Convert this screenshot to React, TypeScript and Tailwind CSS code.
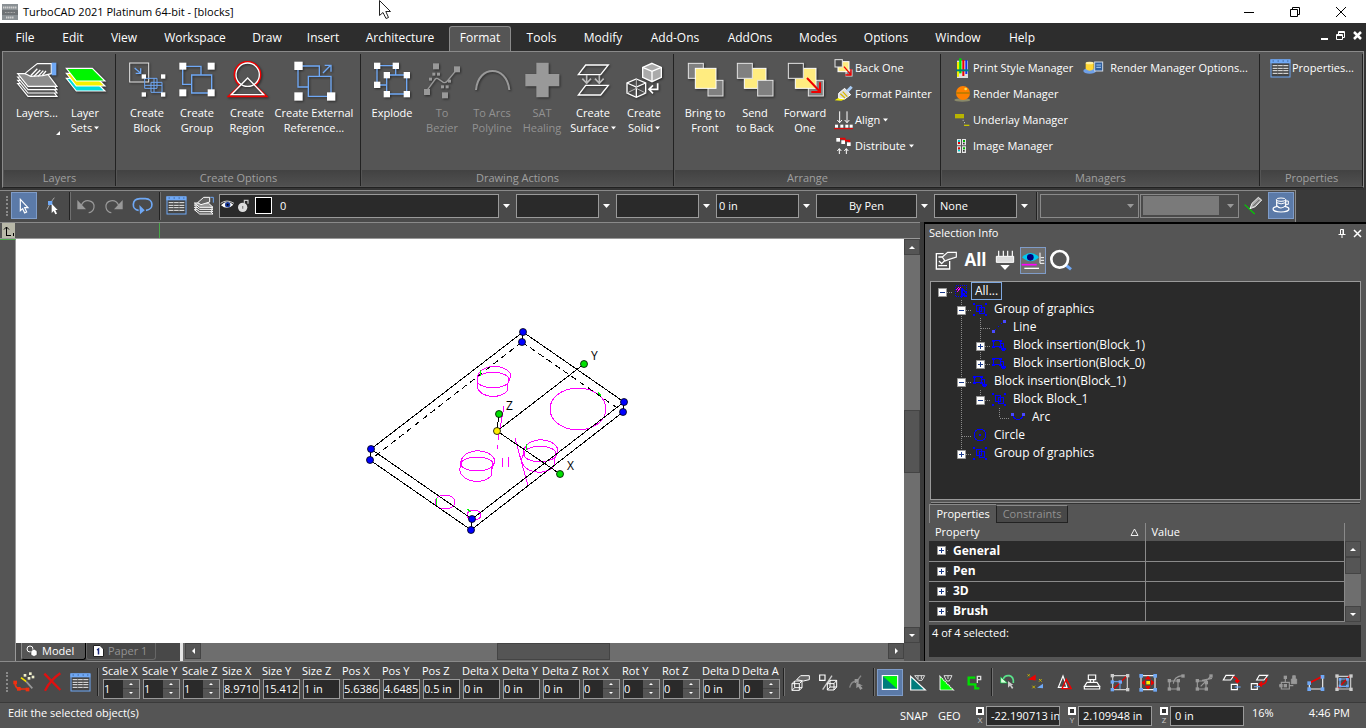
import { useState, type ReactNode } from "react";
import { clsx } from "clsx";

const BLUE = "#6fa8f5";

/* ---------- Icons ---------- */

// Glyphs are drawn on a grid three times finer than the screen.
function Glyph({ box, children }: { box: [number, number, number, number]; children: ReactNode }) {
  return (
    <svg
      viewBox={box.join(" ")}
      width={Math.round(box[2] / 3)}
      height={Math.round(box[3] / 3)}
      className="shrink-0"
      fill="none"
      aria-hidden="true"
    >
      {children}
    </svg>
  );
}

function Dots({ at, size, fill = "#fff" }: { at: number[][]; size: number; fill?: string }) {
  return (
    <>
      {at.map(([x, y]) => (
        <rect key={`${x}-${y}`} x={x} y={y} width={size} height={size} fill={fill} />
      ))}
    </>
  );
}

const LayersIcon = () => (
  <Glyph box={[40, 184, 126, 114]}>
    {[30, 20, 10, 0].map((dy) => (
      <path
        key={dy}
        d={`M45 ${222 + dy}H134L163 ${260 + dy}H76Z`}
        fill={dy ? "#555" : "#8c8c8c"}
        stroke="#fff"
        strokeWidth="3.5"
      />
    ))}
    <path d="M70 219L104 192H146V222L120 228L84 230L68 222Z" fill="#555" stroke="#fff" strokeWidth="3.5" />
    <path d="M84 228L104 207M94 230L113 211M106 230L122 213M118 228L130 214" stroke="#fff" strokeWidth="4" />
    <rect x="147" y="189" width="14" height="38" fill={BLUE} />
  </Glyph>
);

const LayerSetsIcon = () => (
  <Glyph box={[193, 184, 129, 114]}>
    <path d="M200 236H278L316 274H230Z" fill="#00dcdc" stroke="#fff" strokeWidth="3.5" />
    <path d="M200 221H278L316 259H230Z" fill="#f5f000" stroke="#fff" strokeWidth="3.5" />
    <path d="M200 206H278L316 244H230Z" fill="#00f500" stroke="#fff" strokeWidth="3.5" />
  </Glyph>
);

const CreateBlockIcon = () => (
  <Glyph box={[383, 184, 117, 114]}>
    <rect x="388" y="190" width="57" height="57" stroke="#e6e6e6" strokeWidth="3" />
    <path d="M403 205L421 221M421 206V221H406" stroke={BLUE} strokeWidth="4" />
    <path d="M433 236H470V266H433ZM452 248H485V278H452ZM461 236V278M433 257H485" stroke={BLUE} strokeWidth="3" />
    <Dots at={[[424, 224], [482, 224], [424, 278], [482, 278]]} size={13} />
  </Glyph>
);

const CreateGroupIcon = () => (
  <Glyph box={[533, 184, 117, 114]}>
    <path d="M552 200H602V227M547 205V254H574M574 226H634V280H574Z" stroke={BLUE} strokeWidth="4" />
    <Dots at={[[537, 189], [622, 189], [537, 269], [622, 269]]} size={21} />
  </Glyph>
);

const CreateRegionIcon = () => (
  <Glyph box={[680, 184, 123, 114]}>
    <path d="M719 257A39 39 0 1 1 764 257L799 290H684Z" stroke="#f00000" strokeWidth="5" />
    <circle cx="742" cy="225" r="35" stroke="#fff" strokeWidth="4" />
    <path d="M742 235L790 285H693Z" stroke="#fff" strokeWidth="4" />
  </Glyph>
);

const ExternalRefIcon = () => (
  <Glyph box={[875, 181, 129, 120]}>
    <path d="M903 196H954V226M890 208V259H921M921 227H989V287H921Z" stroke={BLUE} strokeWidth="4" />
    <path d="M965 217L988 194M970 194H989V213" stroke={BLUE} strokeWidth="4" />
    <Dots at={[[879, 183], [879, 275], [977, 275]]} size={25} />
  </Glyph>
);

const ExplodeIcon = () => (
  <Glyph box={[36, 32, 120, 114]}>
    <path d="M51 46H107V74M51 46V104H80M80 74H140V131H80Z" stroke={BLUE} strokeWidth="4" />
    <Dots at={[[42, 37], [98, 37], [42, 94], [71, 65], [131, 65], [71, 122], [131, 122]]} size={19} />
  </Glyph>
);

const BezierIcon = () => (
  <Glyph box={[189, 32, 117, 114]}>
    <path d="M201 120L226 86Q230 82 237 87L250 96Q256 99 262 92L290 58" stroke="#999" strokeWidth="4" />
    <Dots at={[[219, 39], [282, 48], [192, 116], [246, 126]]} size={18} fill="#999" />
    <Dots at={[[217, 67], [231, 67], [207, 82], [264, 88], [243, 105], [257, 105]]} size={9} fill="#999" />
  </Glyph>
);

const ArcsIcon = () => (
  <Glyph box={[339, 32, 117, 114]}>
    <path d="M348 119C354 43 441 43 448 119" stroke="#999" strokeWidth="6" />
  </Glyph>
);

const HealingIcon = () => (
  <Glyph box={[488, 32, 117, 114]}>
    <path d="M528 37H565V71H597V108H565V141H528V108H495V71H528Z" fill="#999" />
  </Glyph>
);

const SurfaceIcon = () => (
  <Glyph box={[642, 32, 117, 114]}>
    <path d="M677 44H745L722 73H655ZM677 105H745L722 134H655Z" stroke="#fff" strokeWidth="4" />
    <path d="M680 74V97M667 85L680 99L693 85M718 74V97M705 85L718 99L731 85" stroke="#bbb" strokeWidth="5" />
  </Glyph>
);

const SolidIcon = () => (
  <Glyph box={[796, 34, 117, 114]}>
    <path d="M877 41L905 53V83L877 96L849 83V53Z" fill="#aaa" stroke="#fff" strokeWidth="4" />
    <path d="M849 53L877 65L905 53M877 65V96" stroke="#fff" strokeWidth="4" />
    <path d="M830 88L858 100V130L830 143L802 130V100Z" stroke="#fff" strokeWidth="4" />
    <path d="M802 100L830 112L858 100M830 112V143" stroke="#fff" strokeWidth="4" />
    <path d="M830 88V116L802 130M830 116L858 130" stroke="#bbb" strokeWidth="3" />
    <path d="M894 101V119H868M880 107L868 119L880 131" stroke="#fff" strokeWidth="5" />
  </Glyph>
);

const BringFrontIcon = () => (
  <Glyph box={[46, 34, 117, 114]}>
    <rect x="53" y="41" width="45" height="45" fill="#808080" stroke="#e6e6e6" strokeWidth="3" />
    <rect x="112" y="92" width="45" height="47" fill="#808080" stroke="#e6e6e6" strokeWidth="3" />
    <rect x="74" y="56" width="62" height="60" fill="#ffec80" stroke="#fff" strokeWidth="3" />
  </Glyph>
);

const SendBackIcon = () => (
  <Glyph box={[196, 34, 120, 114]}>
    <rect x="224" y="56" width="65" height="60" fill="#ffec80" stroke="#fff" strokeWidth="3" />
    <rect x="203" y="41" width="45" height="45" fill="#808080" stroke="#e6e6e6" strokeWidth="3" />
    <rect x="264" y="92" width="46" height="47" fill="#808080" stroke="#e6e6e6" strokeWidth="3" />
  </Glyph>
);

const ForwardOneIcon = () => (
  <Glyph box={[346, 34, 117, 114]}>
    <rect x="413" y="92" width="45" height="47" fill="#808080" stroke="#e6e6e6" strokeWidth="3" />
    <rect x="374" y="56" width="62" height="60" fill="#ffec80" stroke="#fff" strokeWidth="3" />
    <rect x="353" y="41" width="45" height="45" fill="#4a4a4a" stroke="#e6e6e6" strokeWidth="3" />
    <path d="M409 85L446 124M448 98V127H422" stroke="#f00000" strokeWidth="6" />
  </Glyph>
);

const BackOneIcon = () => (
  <Glyph box={[494, 24, 60, 60]}>
    <rect x="530" y="60" width="18" height="18" fill="#808080" stroke="#e6e6e6" strokeWidth="3" />
    <rect x="506" y="35" width="33" height="30" fill="#ffec80" stroke="#fff" strokeWidth="3" />
    <rect x="497" y="29" width="22" height="22" fill="#4a4a4a" stroke="#e6e6e6" strokeWidth="3" />
    <path d="M524 50L544 73M545 57V75H528" stroke="#f00000" strokeWidth="4" />
  </Glyph>
);

const PainterIcon = () => (
  <Glyph box={[494, 102, 60, 60]}>
    <path d="M496 151L508 143L522 140L530 146L516 152Z" fill="#f5f000" />
    <path d="M508 130L526 115L544 134L526 147L508 144Z" fill="#ddd" stroke="#fff" strokeWidth="3" />
    <path d="M513 131L527 144M520 125L534 140" stroke="#d8b800" strokeWidth="4" />
    <path d="M534 124L547 110" stroke="#a9cdf5" strokeWidth="9" />
  </Glyph>
);

const AlignIcon = () => (
  <Glyph box={[494, 180, 60, 60]}>
    <path d="M511 184V218M504 210L511 218L518 210M533 184V218M526 210L533 218L540 210" stroke="#fff" strokeWidth="3" />
    <Dots at={[[497, 224], [513, 224], [528, 224], [541, 224]]} size={9} />
    <path d="M494 236H551" stroke="#f00000" strokeWidth="3" />
  </Glyph>
);

const DistributeIcon = () => (
  <Glyph box={[494, 258, 60, 60]}>
    <path d="M511 266H526V272H540V278" stroke="#f00000" strokeWidth="5" />
    <Dots at={[[501, 264], [516, 271], [533, 277]]} size={11} />
    <path d="M510 312V296M504 303L510 296L516 303M531 312V296M525 303L531 296L537 303" stroke="#fff" strokeWidth="3" />
  </Glyph>
);

const PrintStyleIcon = () => (
  <Glyph box={[42, 174, 54, 63]}>
    <path d="M51 182H84V234H51Z" fill="#ddd" />
    <path d="M54 186V230" stroke="#f5f000" strokeWidth="6" />
    <path d="M61 175V220" stroke="#00e000" strokeWidth="7" />
    <path d="M70 180V228" stroke="#f00000" strokeWidth="6" />
    <path d="M79 180V222" stroke="#1030f0" strokeWidth="6" />
    <path d="M48 211H87" stroke="#007c7c" strokeWidth="6" />
  </Glyph>
);

const RenderIcon = () => (
  <Glyph box={[42, 252, 54, 60]}>
    <ellipse cx="67" cy="300" rx="24" ry="5" fill="#8a8a6a" />
    <circle cx="69" cy="279" r="21" fill="#ff8000" />
    <path d="M48 279H90" stroke="#b87a00" strokeWidth="5" />
    <circle cx="77" cy="267" r="4" fill="#ffe14d" />
  </Glyph>
);

const UnderlayIcon = () => (
  <Glyph box={[42, 330, 54, 60]}>
    <path d="M45 342H72V355H45Z" fill="#b8b400" />
    <path d="M68 361H71M72 368H75" stroke="#ccc" strokeWidth="3" />
    <path d="M72 376H88" stroke="#c8c400" strokeWidth="4" />
  </Glyph>
);

const ImageManagerIcon = () => (
  <Glyph box={[42, 408, 54, 60]}>
    <path d="M51 417H63V436H51ZM66 417H78V436H66ZM51 439H63V459H51ZM66 439H78V459H66Z" fill="#e6e6e6" />
    <Dots at={[[54, 420], [54, 448]]} size={6} fill="#00c8c8" />
    <Dots at={[[54, 426], [54, 442]]} size={6} fill="#e00000" />
    <Dots at={[[69, 420], [69, 442]]} size={6} fill="#00b000" />
    <Dots at={[[69, 428], [69, 450]]} size={5} fill="#333" />
  </Glyph>
);

const RenderOptionsIcon = () => (
  <Glyph box={[432, 178, 63, 54]}>
    <ellipse cx="452" cy="214" rx="19" ry="8" fill="#6fa0e8" />
    <path d="M440 190H464V208Q452 218 440 208Z" fill="#ffd633" />
    <ellipse cx="452" cy="190" rx="12" ry="4" fill="#ffefa0" />
    <rect x="467" y="187" width="24" height="27" fill="#2f5f9f" stroke="#cfd8e6" strokeWidth="3" />
    <path d="M472 196H486M472 203H486" stroke="#a9cdf5" strokeWidth="3" />
  </Glyph>
);

const TableIcon = () => (
  <Glyph box={[992, 177, 63, 57]}>
    <rect x="995" y="180" width="57" height="51" fill="#444" stroke={BLUE} strokeWidth="3" />
    <rect x="993" y="178" width="60" height="12" fill={BLUE} />
    <path d="M1000 183H1003M1015 183H1018M1030 183H1033M1044 183H1047" stroke="#26436e" strokeWidth="3" />
    <path d="M1000 197H1047M1000 205H1047M1000 212H1047M1000 220H1047" stroke="#eee" strokeWidth="3" />
    <path d="M1015 192V226M1031 192V226" stroke="#555" strokeWidth="2" />
  </Glyph>
);

/* ---------- Small shared pieces ---------- */

function Caret({ className = "text-white" }: { className?: string }) {
  return (
    <svg viewBox="0 0 7 4" width="7" height="4" className={clsx("shrink-0", className)} aria-hidden="true">
      <path d="M0 0H7L3.5 4Z" fill="currentColor" />
    </svg>
  );
}

function Separator() {
  return <div className="h-7 w-0.5 shrink-0 border-r border-l border-r-[#707070] border-l-[#222]" />;
}

function Grip() {
  return <div className="h-5 w-[3px] shrink-0 border-l-2 border-dotted border-[#8a8a8a]" />;
}

interface ToolButtonProps {
  label: string;
  active?: boolean;
  tone?: string;
  children: ReactNode;
}

function ToolButton({ label, active = false, tone = "bg-[#5b7aa8]", children }: ToolButtonProps) {
  return (
    <button
      aria-label={label}
      title={label}
      className={clsx(
        "mx-px flex h-[27px] w-[26px] shrink-0 items-center justify-center",
        active && "border border-[#7f9cc8]",
        active && tone
      )}
    >
      {children}
    </button>
  );
}

/* ---------- Title and menu ---------- */

function TitleBar() {
  return (
    <header className="flex h-[23px] shrink-0 items-center bg-white pl-0.5 text-black">
      <svg viewBox="0 0 16 16" width="16" height="16" aria-hidden="true">
        <path d="M0 0H16V16H0Z" fill="#8a9094" />
        <path d="M0 6H16V11H0Z" fill="#6f7376" />
        <path d="M1 3.5H15M4 13.5H12" stroke="#d0d0d0" strokeWidth="2" strokeDasharray="1.5 .5" />
        <path d="M3 8.5H13" stroke="#aaa" strokeDasharray="1 .5" />
      </svg>
      <h1 className="pl-[5px]">TurboCAD 2021 Platinum 64-bit - [blocks]</h1>
      <div className="ml-auto flex pr-0.5">
        <button aria-label="Minimize" className="flex h-[22px] w-[46px] items-center justify-center">
          <svg viewBox="0 0 10 10" width="10" height="10" stroke="#000">
            <path d="M0 5.5H10" />
          </svg>
        </button>
        <button aria-label="Restore" className="flex h-[22px] w-[46px] items-center justify-center">
          <svg viewBox="0 0 10 10" width="10" height="10" stroke="#000" fill="none">
            <path d="M.5 2.5H7.5V9.5H.5ZM2.5 2.5V.5H9.5V7.5H7.5" />
          </svg>
        </button>
        <button aria-label="Close" className="flex h-[22px] w-[46px] items-center justify-center">
          <svg viewBox="0 0 10 10" width="10" height="10" stroke="#000">
            <path d="M0 0L10 10M10 0L0 10" />
          </svg>
        </button>
      </div>
    </header>
  );
}

const MENUS = [
  { label: "File", width: "w-12" },
  { label: "Edit", width: "w-12" },
  { label: "View", width: "w-[54px]" },
  { label: "Workspace", width: "w-[88px]" },
  { label: "Draw", width: "w-14" },
  { label: "Insert", width: "w-14" },
  { label: "Architecture", width: "w-[98px]" },
  { label: "Format", width: "w-[62px]" },
  { label: "Tools", width: "w-[61px]" },
  { label: "Modify", width: "w-[62px]" },
  { label: "Add-Ons", width: "w-[82px]" },
  { label: "AddOns", width: "w-[68px]" },
  { label: "Modes", width: "w-[68px]" },
  { label: "Options", width: "w-[68px]" },
  { label: "Window", width: "w-[76px]" },
  { label: "Help", width: "w-[52px]" },
];

function MenuBar() {
  const [active, setActive] = useState("Format");

  return (
    <nav className="flex h-7 shrink-0 items-end bg-[#2d2d2d] pl-px">
      {MENUS.map(({ label, width }) => (
        <button
          key={label}
          onClick={() => setActive(label)}
          className={clsx(
            "h-[26px] shrink-0 text-center text-[12px]",
            width,
            active === label && "-mb-px rounded-t-[3px] border border-b-0 border-[#8a8a8a] bg-[#555] pb-[3px]"
          )}
        >
          {label}
        </button>
      ))}
      <div className="ml-auto flex gap-2 self-center pr-1 pb-1">
        <button aria-label="Minimize document">
          <svg viewBox="0 0 8 9" width="8" height="9">
            <path d="M1 7H8V9H1Z" fill="#fff" />
          </svg>
        </button>
        <button aria-label="Restore document">
          <svg viewBox="0 0 9 9" width="9" height="9" fill="none" stroke="#fff">
            <path d="M.5 3.5H6.5V8.5H.5ZM.5 4.5H6.5M2.5 3V.5H8.5V6.5H7M2.5 1.5H8.5" />
          </svg>
        </button>
        <button aria-label="Close document">
          <svg viewBox="0 0 9 9" width="9" height="9" stroke="#fff" strokeWidth="2.5">
            <path d="M1 1L8 8M8 1L1 8" />
          </svg>
        </button>
      </div>
    </nav>
  );
}

/* ---------- Ribbon ---------- */

interface BigButtonProps {
  icon: ReactNode;
  lines: string[];
  width?: string;
  disabled?: boolean;
  menu?: boolean;
}

function BigButton({ icon, lines, width = "w-[50px]", disabled = false, menu = false }: BigButtonProps) {
  return (
    <button
      disabled={disabled}
      className={clsx(
        "flex shrink-0 flex-col items-center pt-[7px] whitespace-nowrap",
        width,
        disabled && "text-[#929292]"
      )}
    >
      <span className="flex h-11 items-start drop-shadow-[1px_1px_1px_rgba(0,0,0,0.5)]">{icon}</span>
      {lines.map((line, i) => (
        <span key={line} className="flex items-center gap-0.5 leading-[15px]">
          {line}
          {menu && i === lines.length - 1 && <Caret className="w-[5px]" />}
        </span>
      ))}
    </button>
  );
}

function SmallButton({ icon, label, menu = false }: { icon: ReactNode; label: string; menu?: boolean }) {
  return (
    <button className="flex h-[26px] items-center gap-px whitespace-nowrap">
      {icon}
      {label}
      {menu && <Caret className="ml-0.5 w-[5px]" />}
    </button>
  );
}

function RibbonGroup({ title, width, children }: { title: string; width: string; children: ReactNode }) {
  return (
    <section className={clsx("flex flex-col border-r border-r-[#222] pl-px", width)}>
      <div className="flex flex-1">{children}</div>
      <h2 className="h-4 bg-linear-to-b from-[#424242] to-[#505050] text-center leading-4 text-[#a0a0a0]">
        {title}
      </h2>
    </section>
  );
}

function Ribbon() {
  return (
    <div className="shrink-0 bg-[#353535] px-0.5 pb-0.5">
      <div className="flex h-[137px] divide-x divide-[#8a8a8a] border border-[#8a8a8a] border-b-[#222] bg-[#555] pt-0.5 pb-px">
        <RibbonGroup title="Layers" width="w-[113px]">
          <div className="flex items-start pl-2">
            <BigButton icon={<LayersIcon />} lines={["Layers..."]} />
            <svg viewBox="0 0 4 4" width="4" height="4" className="mt-[77px] -ml-1.5" aria-hidden="true">
              <path d="M4 0V4H0Z" fill="#fff" />
            </svg>
            <BigButton icon={<LayerSetsIcon />} lines={["Layer", "Sets"]} menu />
          </div>
        </RibbonGroup>
        <RibbonGroup title="Create Options" width="w-[245px]">
          <div className="flex items-start pl-[5px]">
            <BigButton icon={<CreateBlockIcon />} lines={["Create", "Block"]} />
            <BigButton icon={<CreateGroupIcon />} lines={["Create", "Group"]} />
            <BigButton icon={<CreateRegionIcon />} lines={["Create", "Region"]} />
            <BigButton icon={<ExternalRefIcon />} lines={["Create External", "Reference..."]} width="w-[84px]" />
          </div>
        </RibbonGroup>
        <RibbonGroup title="Drawing Actions" width="w-[313px]">
          <div className="flex items-start pl-[5px]">
            <BigButton icon={<ExplodeIcon />} lines={["Explode"]} />
            <BigButton icon={<BezierIcon />} lines={["To", "Bezier"]} disabled />
            <BigButton icon={<ArcsIcon />} lines={["To Arcs", "Polyline"]} disabled />
            <BigButton icon={<HealingIcon />} lines={["SAT", "Healing"]} disabled />
            <BigButton icon={<SurfaceIcon />} lines={["Create", "Surface"]} width="w-[52px]" menu />
            <BigButton icon={<SolidIcon />} lines={["Create", "Solid"]} menu />
          </div>
        </RibbonGroup>
        <RibbonGroup title="Arrange" width="w-[267px]">
          <div className="flex items-start pl-[5px]">
            <BigButton icon={<BringFrontIcon />} lines={["Bring to", "Front"]} />
            <BigButton icon={<SendBackIcon />} lines={["Send", "to Back"]} />
            <BigButton icon={<ForwardOneIcon />} lines={["Forward", "One"]} />
            <div className="flex flex-col pt-px pl-1">
              <SmallButton icon={<BackOneIcon />} label="Back One" />
              <SmallButton icon={<PainterIcon />} label="Format Painter" />
              <SmallButton icon={<AlignIcon />} label="Align" menu />
              <SmallButton icon={<DistributeIcon />} label="Distribute" menu />
            </div>
          </div>
        </RibbonGroup>
        <RibbonGroup title="Managers" width="w-[319px]">
          <div className="flex items-start gap-2.5 pt-px pl-3">
            <div className="flex flex-col">
              <SmallButton icon={<PrintStyleIcon />} label="Print Style Manager" />
              <SmallButton icon={<RenderIcon />} label="Render Manager" />
              <SmallButton icon={<UnderlayIcon />} label="Underlay Manager" />
              <SmallButton icon={<ImageManagerIcon />} label="Image Manager" />
            </div>
            <button className="flex h-[26px] items-center gap-1.5 whitespace-nowrap">
              <RenderOptionsIcon />
              Render Manager Options...
            </button>
          </div>
        </RibbonGroup>
        <RibbonGroup title="Properties" width="flex-1">
          <div className="pt-px pl-[9px]">
            <SmallButton icon={<TableIcon />} label="Properties..." />
          </div>
        </RibbonGroup>
      </div>
    </div>
  );
}

/* ---------- Pen and layer toolbar ---------- */

interface ComboProps {
  label: string;
  value: string;
  width?: string;
  align?: string;
}

function Combo({ label, value, width = "w-[83px]", align = "pl-0.5" }: ComboProps) {
  return (
    <label className="flex shrink-0 items-center gap-1">
      <select
        aria-label={label}
        className={clsx("h-6 appearance-none border border-[#9a9a9a] bg-[#2a2a2a] text-white", width, align)}
      >
        <option>{value}</option>
      </select>
      <span className="flex w-3 justify-start">
        <Caret />
      </span>
    </label>
  );
}

function PenToolbar() {
  return (
    <div className="flex h-8 shrink-0 bg-[#3a3a3a]">
      <div className="flex items-center border-t border-r border-[#8a8a8a] bg-[#4a4a4a] pb-0.5 pl-1.5">
        <Grip />
        <div className="flex items-center pr-[3px] pl-px">
          <ToolButton label="Select" active>
            <Glyph box={[54, 38, 36, 48]}>
              <path d="M61 42V76L68 70L74 83L80 80L74 67H84Z" fill="#5b7aa8" stroke="#fff" strokeWidth="3.5" />
            </Glyph>
          </ToolButton>
          <ToolButton label="Edit Node">
            <Glyph box={[133, 38, 48, 54]}>
              <path d="M164 40L152 56L142 76" stroke="#aaa" strokeWidth="3" />
              <path d="M145 50H158V62H145Z" fill={BLUE} />
              <path d="M156 58V86L162 80L167 90L172 88L167 77H174Z" fill="#fff" />
            </Glyph>
          </ToolButton>
        </div>
        <Separator />
        <div className="flex items-center pr-[3px] pl-px">
          <ToolButton label="Undo">
            <Glyph box={[228, 38, 60, 48]}>
              <path d="M232 44V72H258Z" fill="#999" />
              <path d="M244 60C254 38 284 44 282 66C281 76 272 82 266 82" stroke="#999" strokeWidth="3.5" />
            </Glyph>
          </ToolButton>
          <ToolButton label="Redo">
            <Glyph box={[312, 38, 60, 48]}>
              <path d="M368 44V72H342Z" fill="#999" />
              <path d="M356 60C346 38 316 44 318 66C319 76 328 82 334 82" stroke="#999" strokeWidth="3.5" />
            </Glyph>
          </ToolButton>
          <ToolButton label="Redraw">
            <Glyph box={[396, 36, 63, 54]}>
              <path d="M416 76C394 74 394 42 420 41H436C462 42 462 74 438 76" stroke={BLUE} strokeWidth="5" />
              <path d="M418 60L434 76L420 88Z" fill={BLUE} />
            </Glyph>
          </ToolButton>
        </div>
        <Separator />
        <div className="flex items-center px-px">
          <ToolButton label="Properties">
            <TableIcon />
          </ToolButton>
          <ToolButton label="Layers">
            <Glyph box={[580, 34, 66, 57]}>
              {[20, 13, 6, 0].map((dy) => (
                <path
                  key={dy}
                  d={`M584 ${55 + dy}H626L640 ${68 + dy}H600Z`}
                  fill={dy ? "#555" : "#999"}
                  stroke="#fff"
                  strokeWidth="3"
                />
              ))}
              <path d="M594 54L612 38H630V52L604 60Z" fill="#666" stroke="#fff" strokeWidth="3" />
              <path d="M632 38H641V54" stroke={BLUE} strokeWidth="3" />
            </Glyph>
          </ToolButton>
        </div>

        <div className="flex items-center gap-px">
          <label className="flex items-center gap-1">
            <span className="flex h-6 items-center border border-[#9a9a9a] bg-[#2a2a2a]">
              <Glyph box={[666, 42, 51, 45]}>
                <path d="M669 64Q686 44 706 62Q688 80 669 64Z" fill="#fff" />
                <path d="M668 58Q686 44 708 58" stroke="#ccc" strokeWidth="3" />
                <circle cx="689" cy="62" r="8" fill="#1a3a9a" />
                <circle cx="689" cy="62" r="3" fill="#000" />
              </Glyph>
              <Glyph box={[717, 38, 42, 48]}>
                <circle cx="734" cy="66" r="14" fill="#ddd" />
                <path d="M739 56V45H750V55" stroke="#ccc" strokeWidth="3.5" />
                <path d="M734 62V70" stroke="#888" strokeWidth="4" />
              </Glyph>
              <span className="ml-1 size-[17px] border border-white bg-black" />
              <select aria-label="Layer" className="h-full w-[226px] appearance-none bg-[#2a2a2a] pl-2">
                <option>0</option>
              </select>
            </span>
            <span className="w-3">
              <Caret />
            </span>
          </label>
          <Combo label="Pen color" value="" />
          <Combo label="Pen pattern" value="" />
          <Combo label="Pen width" value="0 in" />
          <Combo label="Pen style" value="By Pen" width="w-[101px]" align="text-center" />
          <Combo label="Brush" value="None" align="pl-[5px]" />
        </div>
        <div className="pl-[3px]">
          <Separator />
        </div>
        <div className="flex items-center pl-0.5">
          <label className="flex h-6 w-[99px] items-center border border-[#8a8a8a] bg-[#4a4a4a] pr-1">
            <select aria-label="Hatch pattern" disabled className="min-w-0 flex-1 appearance-none" />
            <Caret className="text-[#999]" />
          </label>
          <label className="ml-px flex h-6 w-[99px] items-center gap-2 border border-[#8a8a8a] bg-[#4a4a4a] pr-1 pl-0.5">
            <select aria-label="Hatch color" disabled className="h-[19px] min-w-0 flex-1 appearance-none bg-[#7a7a7a]" />
            <Caret className="text-[#999]" />
          </label>
          <ToolButton label="Pick pen">
            <Glyph box={[972, 34, 57, 57]}>
              <path d="M974 60L1004 88" stroke="#00d000" strokeWidth="3.5" />
              <path d="M990 72L996 56L1015 38L1025 46L1006 66Z" fill="#aaa" stroke="#eee" strokeWidth="3" />
              <path d="M1000 64L1018 46" stroke="#555" strokeWidth="3" />
            </Glyph>
          </ToolButton>
          <ToolButton label="Render" active>
            <Glyph box={[1056, 38, 54, 51]}>
              <ellipse cx="1083" cy="74" rx="24" ry="9" stroke="#fff" strokeWidth="3.5" />
              <path d="M1070 46V64Q1082 78 1097 64V46" fill="#5b7aa8" stroke="#fff" strokeWidth="3.5" />
              <ellipse cx="1083" cy="46" rx="14" ry="5" stroke="#fff" strokeWidth="3" />
              <path d="M1070 55Q1083 62 1097 55M1097 50H1105V60H1097" stroke="#fff" strokeWidth="3" />
            </Glyph>
          </ToolButton>
        </div>
      </div>
    </div>
  );
}

/* ---------- Drawing area ---------- */

type Direction = "up" | "down" | "left" | "right";

const ARROWS: Record<Direction, string> = {
  up: "M1 6H7L4 3Z",
  down: "M1 3H7L4 6Z",
  left: "M6 1V7L3 4Z",
  right: "M3 1V7L6 4Z",
};

function ScrollButton({ dir }: { dir: Direction }) {
  return (
    <button
      aria-label={`Scroll ${dir}`}
      className="flex size-4 shrink-0 items-center justify-center border border-[#444] bg-[#555]"
    >
      <svg viewBox="0 0 8 8" width="8" height="8" aria-hidden="true">
        <path d={ARROWS[dir]} fill="#fff" />
      </svg>
    </button>
  );
}

const HANDLES = [
  { x: 523, y: 332, fill: "#0000ff" },
  { x: 522, y: 342, fill: "#0000ff" },
  { x: 624, y: 402, fill: "#0000ff" },
  { x: 623, y: 412, fill: "#0000ff" },
  { x: 371, y: 449, fill: "#0000ff" },
  { x: 370, y: 460, fill: "#0000ff" },
  { x: 472, y: 519, fill: "#0000ff" },
  { x: 471, y: 530, fill: "#0000ff" },
  { x: 584, y: 364, fill: "#00e000" },
  { x: 499, y: 414, fill: "#00e000" },
  { x: 560, y: 474, fill: "#00e000" },
  { x: 497, y: 431, fill: "#ffee00" },
];

function Drawing() {
  return (
    <svg
      viewBox="17 239 886 404"
      preserveAspectRatio="xMinYMin meet"
      className="h-full w-full"
      fill="none"
      role="img"
      aria-label="blocks"
    >
      <g shapeRendering="crispEdges">
        <g stroke="#ff00ff">
          <ellipse cx="578" cy="409" rx="28" ry="21" />
          <path d="M478 382A17 12 0 1 1 511 375L507 386V391A16 11 0 0 1 478 382Z" />
          <ellipse cx="493" cy="380" rx="16" ry="8" />
          <path d="M461 465A17 12 0 1 1 495 461L491 471V476A17 12 0 0 1 461 465Z" />
          <ellipse cx="477" cy="464" rx="16" ry="7" />
          <path d="M524 454A17 12 0 1 1 558 450L554 461V466A17 12 0 0 1 524 454Z" />
          <ellipse cx="540" cy="454" rx="16" ry="8" />
          <ellipse cx="445" cy="502" rx="10" ry="7" />
          <ellipse cx="474" cy="515" rx="7" ry="5" />
          <path d="M504 406L498 440M497 445V449M515 438L528 486M502 458L503 467M508 457L509 467" />
        </g>
        <path
          d="M523 332L624 402L472 519L371 449ZM623 412L471 530L370 460M371 449L370 460M472 519L471 530M624 402L623 412M523 332L522 342"
          stroke="#000"
        />
        <path d="M522 342L370 460M522 342L623 412" stroke="#000" strokeDasharray="6 4" />
        <path d="M584 364L497 431L560 474M499 414L497 431" stroke="#000" />
        <path d="M467 509L471 512M436 498V505M480 370V376M526 444V450M598 392L601 396" stroke="#00ff00" />
      </g>
      {HANDLES.map(({ x, y, fill }) => (
        <circle key={`${x}-${y}`} cx={x} cy={y} r="3.5" fill={fill} stroke="#000" strokeWidth=".8" />
      ))}
      <g fill="#000" fontSize="12">
        <text x="591" y="360">Y</text>
        <text x="506" y="410">Z</text>
        <text x="567" y="470">X</text>
      </g>
    </svg>
  );
}

function SheetTabs() {
  return (
    <div className="flex h-[18px] min-w-0 flex-1 items-start bg-[#6e6e6e]">
      <div className="flex h-full w-[164px] shrink-0 items-start bg-[#484848] pl-[5px]">
        <button className="flex h-[17px] w-[65px] items-center gap-1 rounded-b-[3px] border border-t-0 border-[#8a8a8a] border-r-black border-b-black bg-[#555] pl-1">
          <svg viewBox="0 0 12 12" width="12" height="12" fill="none" aria-hidden="true">
            <circle cx="4" cy="4" r="3" stroke="#fff" />
            <path d="M5 6L8 4L11 6V10L8 11.5L5 10Z" fill="#fff" stroke="#222" strokeWidth=".5" />
          </svg>
          Model
        </button>
        <button className="flex h-[17px] w-[70px] items-center gap-1 rounded-b-[3px] border border-t-0 border-[#666] pl-1.5 text-[#929292]">
          <svg viewBox="0 0 11 12" width="11" height="12" aria-hidden="true">
            <path d="M.5 .5H7L10.5 4V11.5H.5Z" fill="#fff" stroke="#222" />
            <path d="M4 5L5.5 4V9.5" stroke="#1a2a7a" strokeWidth="1.5" fill="none" />
          </svg>
          Paper 1
        </button>
      </div>
      <div className="mr-0.5 h-full w-[3px] shrink-0 bg-[#e6e6e6]" />
      <ScrollButton dir="left" />
      <div className="flex-[297]" />
      <div className="h-[17px] flex-[111] border border-[#444] bg-[#555]" />
      <div className="flex-[279]" />
      <ScrollButton dir="right" />
    </div>
  );
}

function Workspace() {
  return (
    <main className="flex min-w-0 flex-1 flex-col border-t border-[#8a8a8a] bg-[#555]">
      <div className="flex h-4 shrink-0 border-b border-[#999]">
        <div className="ml-0.5 w-[13px] bg-[#b8b8a8]">
          <svg viewBox="0 0 13 15" width="13" height="15" fill="none" stroke="#000" aria-hidden="true">
            <path d="M4.5 13V4M2 6.5L4.5 4L7 6.5M4 12.5H9M11.5 10V13" />
          </svg>
        </div>
        <div className="w-[145px] border-r border-[#4aa84a]" />
      </div>
      <div className="flex min-h-0 flex-1">
        <div className="w-4 shrink-0 border-t border-r border-t-[#4aa84a] border-r-[#999]" />
        <div className="flex min-w-0 flex-1 flex-col">
          <div className="flex min-h-0 flex-1">
            <div className="min-h-0 min-w-0 flex-1 bg-white pl-px">
              <Drawing />
            </div>
            <div className="flex w-4 shrink-0 flex-col bg-[#6e6e6e]">
              <ScrollButton dir="up" />
              <div className="flex-[156]" />
              <div className="flex-[62] border border-[#444] bg-[#555]" />
              <div className="flex-[155]" />
              <ScrollButton dir="down" />
            </div>
          </div>
          <div className="flex pr-4">
            <SheetTabs />
          </div>
        </div>
      </div>
    </main>
  );
}

/* ---------- Selection info panel ---------- */

type NodeKind = "all" | "group" | "line" | "insert" | "arc" | "circle";

function NodeIcon({ kind }: { kind: NodeKind }) {
  return (
    <svg
      viewBox="0 0 14 14"
      width="14"
      height="14"
      fill="none"
      stroke="#0000ff"
      shapeRendering="crispEdges"
      className="mr-[3px] ml-0.5 shrink-0"
      aria-hidden="true"
    >
      {kind === "all" && (
        <>
          <path d="M1.5 1.5H12.5V12.5H1.5Z" strokeDasharray="1 1" />
          <path d="M3 8L7 3M2 6L5 3" stroke="#ff00ff" />
          <path d="M8 4V12L10 10L12 13M8 4L12.5 9" strokeWidth="1.5" />
        </>
      )}
      {kind === "group" && (
        <>
          <path d="M3.5 3.5H8.5V9.5H3.5ZM6 5.5H11.5V11H6Z" />
          <path d="M0 1.5H2M12 1.5H14M0 12.5H2M12 12.5H14" strokeWidth="2" />
        </>
      )}
      {kind === "line" && (
        <>
          <path d="M3 10L11 2" strokeDasharray="2 2" />
          <path d="M0 11.5H3M11 1.5H14" stroke="#4a4aff" strokeWidth="3" />
        </>
      )}
      {kind === "insert" && (
        <>
          <path d="M1.5 2.5H8.5V8.5H1.5ZM8.5 5.5H11.5V11" />
          <path d="M0 2.5H3M7 2.5H10M0 8.5H3M7 8.5H10M9 10.5H14M10 12H13" strokeWidth="2" />
        </>
      )}
      {kind === "arc" && (
        <>
          <path d="M2 5C3 11 11 11 12 5" />
          <path d="M0 4.5H3M11 4.5H14" stroke="#4a4aff" strokeWidth="3" />
        </>
      )}
      {kind === "circle" && (
        <>
          <circle cx="7" cy="7" r="6" />
          <path d="M6 7H8" strokeWidth="2" />
        </>
      )}
    </svg>
  );
}

// Cell codes: v = pass-through, t = tee, l = corner, r = root, each with an optional + or - box.
const TREE: { cells: string[]; kind: NodeKind; label: string }[] = [
  { cells: ["r-"], kind: "all", label: "All..." },
  { cells: ["", "t-"], kind: "group", label: "Group of graphics" },
  { cells: ["", "v", "t"], kind: "line", label: "Line" },
  { cells: ["", "v", "t+"], kind: "insert", label: "Block insertion(Block_1)" },
  { cells: ["", "v", "l+"], kind: "insert", label: "Block insertion(Block_0)" },
  { cells: ["", "t-"], kind: "insert", label: "Block insertion(Block_1)" },
  { cells: ["", "v", "l-"], kind: "group", label: "Block Block_1" },
  { cells: ["", "v", "", "l"], kind: "arc", label: "Arc" },
  { cells: ["", "t"], kind: "circle", label: "Circle" },
  { cells: ["", "l+"], kind: "group", label: "Group of graphics" },
];

function TreeCell({ code }: { code: string }) {
  const [line, box] = code;
  return (
    <svg viewBox="0 0 19 18" width="19" height="18" fill="none" className="shrink-0" aria-hidden="true">
      <g stroke="#8a8a8a" strokeDasharray="1 1">
        {(line === "v" || line === "t") && <path d="M9.5 0V18" />}
        {line === "l" && <path d="M9.5 0V10" />}
        {line && line !== "v" && <path d="M10 10.5H19" />}
      </g>
      {box && (
        <>
          <path d="M5.5 6.5H13.5V14.5H5.5Z" fill="#fff" stroke="#999" />
          <path d={box === "+" ? "M7 10.5H12M9.5 8V13" : "M7 10.5H12"} stroke="#1a3a8a" />
        </>
      )}
    </svg>
  );
}

function SelectionTree() {
  return (
    <ul role="tree" className="mx-[5px] h-[219px] shrink-0 overflow-hidden border border-[#9a9a9a] bg-[#2a2a2a] pl-0.5">
      {TREE.map(({ cells, kind, label }, i) => (
        <li key={i} role="treeitem" aria-selected={i === 0} className="flex h-[18px] items-center">
          {cells.map((code, j) => (
            <TreeCell key={j} code={code} />
          ))}
          <NodeIcon kind={kind} />
          <span
            className={clsx("border px-[3px] text-[12px] leading-4", i === 0 ? "border-[#7fa8e0]" : "border-transparent")}
          >
            {label}
          </span>
        </li>
      ))}
    </ul>
  );
}

function PropertyTable() {
  return (
    <div className="flex">
      <table className="flex-1 table-fixed border-collapse text-left">
        <thead>
          <tr className="h-[18px]">
            <th scope="col" className="w-[216px] border-r border-[#8a8a8a] p-0 font-normal">
              <span className="flex items-center justify-between px-1.5">
                Property
                <svg viewBox="0 0 9 8" width="9" height="8" fill="none" stroke="#eee" aria-hidden="true">
                  <path d="M4.5 1L8 7.5H1Z" />
                </svg>
              </span>
            </th>
            <th scope="col" className="border-r border-[#8a8a8a] p-0 pl-1.5 font-normal">
              Value
            </th>
          </tr>
        </thead>
        <tbody className="bg-[#2a2a2a]">
          {["General", "Pen", "3D", "Brush"].map((name) => (
            <tr key={name} className="h-5">
              <th scope="row" className="border-r border-b border-[#8a8a8a] p-0 text-[12px] leading-4 font-bold">
                <span className="flex items-center gap-1 pl-2">
                  <svg viewBox="0 0 12 9" width="12" height="9" fill="none" aria-hidden="true">
                    <path d="M.5 .5H8.5V8.5H.5Z" fill="#fff" stroke="#999" />
                    <path d="M2 4.5H7M4.5 2V7" stroke="#1a3a8a" />
                    <path d="M10 4.5H12" stroke="#8a8a8a" strokeDasharray="1 1" />
                  </svg>
                  {name}
                </span>
              </th>
              <td className="border-r border-b border-[#8a8a8a] p-0" />
            </tr>
          ))}
        </tbody>
      </table>
      <div className="mt-[18px] flex w-4 flex-col bg-[#6e6e6e]">
        <ScrollButton dir="up" />
        <div className="h-[17px] border border-[#444] bg-[#555]" />
        <div className="flex-1" />
        <ScrollButton dir="down" />
      </div>
    </div>
  );
}

function SelectionPanel() {
  return (
    <aside className="ml-1 flex w-[442px] shrink-0 flex-col border-t-2 border-l border-black bg-[#555]">
      <div className="flex h-[18px] shrink-0 items-center pr-1 pl-1">
        <h2>Selection Info</h2>
        <button aria-label="Pin" className="ml-auto">
          <svg viewBox="0 0 8 9" width="8" height="9" fill="none" stroke="#fff" aria-hidden="true">
            <path d="M2.5 5V.5H5.5V5M5 .5V5M.5 5.5H7.5M4 6V9" />
          </svg>
        </button>
        <button aria-label="Close panel" className="ml-[7px]">
          <svg viewBox="0 0 9 9" width="9" height="9" stroke="#fff" strokeWidth="1.5" aria-hidden="true">
            <path d="M1 1L8 8M8 1L1 8" />
          </svg>
        </button>
      </div>

      <div className="flex h-[39px] shrink-0 items-center pb-[3px] pl-[7px]">
        <ToolButton label="Selector properties">
          <Glyph box={[44, 196, 69, 57]}>
            <path d="M70 204H48V250H88V226" stroke="#fff" strokeWidth="4" />
            <path d="M54 214H66M54 240H80M56 226L64 234L80 218" stroke="#fff" strokeWidth="4" />
            <path d="M66 214L82 200H108V214L84 222L74 226Z" fill="#666" stroke="#fff" strokeWidth="3.5" />
          </Glyph>
        </ToolButton>
        <button className="w-[31px] text-center text-[17px] leading-5 font-bold">All</button>
        <ToolButton label="Filter">
          <Glyph box={[222, 192, 60, 63]}>
            <path d="M233 194V210M247 194V210M260 194V210M274 194V210" stroke="#fff" strokeWidth="3.5" />
            <path d="M226 211H278V229H226Z" fill="#ddd" stroke="#fff" strokeWidth="3" />
            <path d="M238 237H266L252 252Z" fill="#fff" />
          </Glyph>
        </ToolButton>
        <ToolButton label="Visibility" active tone="bg-[#6e6e6e]">
          <Glyph box={[303, 192, 72, 63]}>
            <path d="M306 214Q332 188 357 214Q332 238 306 214Z" fill="#00c8f0" />
            <circle cx="331" cy="214" r="10" fill="#00007a" />
            <path d="M305 236H350" stroke="#ff00ff" strokeWidth="5" />
            <path d="M313 247H357" stroke="#fff" strokeWidth="4" />
            <path d="M360 200V232H373M362 215H372M362 223H372" stroke="#fff" strokeWidth="3" />
          </Glyph>
        </ToolButton>
        <ToolButton label="Zoom to selection">
          <Glyph box={[390, 190, 72, 66]}>
            <path d="M440 238L456 251" stroke={BLUE} strokeWidth="9" />
            <circle cx="422" cy="221" r="25" stroke="#fff" strokeWidth="8" />
          </Glyph>
        </ToolButton>
      </div>

      <SelectionTree />

      <div className="mx-1.5 mt-0.5 h-0.5 shrink-0 border-t border-b border-t-[#8a8a8a] border-b-[#333]" />
      <div className="mr-[5px] ml-1">
        <div className="flex items-end">
          <button className="h-[19px] w-[67px] border-t border-l border-[#8a8a8a] text-center">Properties</button>
          <button className="h-[18px] w-[72px] border border-[#222] border-t-[#8a8a8a] bg-[#484848] text-center text-[#929292]">
            Constraints
          </button>
        </div>
        <PropertyTable />
        <p className="mt-[3px] h-8 bg-[#2a2a2a] pl-[3px] leading-[15px]">4 of 4 selected:</p>
      </div>
    </aside>
  );
}

/* ---------- Inspector bar ---------- */

const FIELDS = [
  { label: "Scale X", value: "1", spin: true },
  { label: "Scale Y", value: "1", spin: true },
  { label: "Scale Z", value: "1", spin: true },
  { label: "Size X", value: "8.9710" },
  { label: "Size Y", value: "15.412" },
  { label: "Size Z", value: "1 in" },
  { label: "Pos X", value: "5.6386" },
  { label: "Pos Y", value: "4.6485" },
  { label: "Pos Z", value: "0.5 in" },
  { label: "Delta X", value: "0 in" },
  { label: "Delta Y", value: "0 in" },
  { label: "Delta Z", value: "0 in" },
  { label: "Rot X", value: "0", spin: true },
  { label: "Rot Y", value: "0", spin: true },
  { label: "Rot Z", value: "0", spin: true },
  { label: "Delta D", value: "0 in" },
  { label: "Delta A", value: "0", spin: true },
];

function InspectorField({ label, value, spin = false }: { label: string; value: string; spin?: boolean }) {
  const id = label.replace(" ", "-").toLowerCase();
  return (
    <div className="w-10 shrink-0 pl-px">
      <label htmlFor={id} className="block leading-[15px] whitespace-nowrap">
        {label}
      </label>
      <div className="mt-px ml-px flex h-5 w-[37px] border border-[#9a9a9a] bg-[#2a2a2a]">
        <input id={id} defaultValue={value} className="min-w-0 flex-1 bg-transparent" />
        {spin && (
          <div className="flex w-4 flex-col gap-px bg-[#444]">
            <button aria-label={`Increase ${label}`} className="flex flex-1 items-center justify-center bg-[#555]">
              <svg viewBox="0 0 4 2" width="4" height="2">
                <path d="M0 2H4L2 0Z" fill="#fff" />
              </svg>
            </button>
            <button aria-label={`Decrease ${label}`} className="flex flex-1 items-center justify-center bg-[#555]">
              <svg viewBox="0 0 4 2" width="4" height="2">
                <path d="M0 0H4L2 2Z" fill="#fff" />
              </svg>
            </button>
          </div>
        )}
      </div>
    </div>
  );
}

const EDIT_TOOLS: { label: string; icon: ReactNode }[] = [
  {
    label: "Select in 3D",
    icon: (
      <Glyph box={[362, 114, 48, 54]}>
        <path d="M372 132Q376 120 390 122Q404 126 402 144" stroke="#5ae08a" strokeWidth="5" />
        <path d="M364 126V144H384Z" fill="#dfd" stroke="#00c040" strokeWidth="2" />
        <path d="M386 138V158L392 152L398 162L402 158L396 150H402Z" fill="#ccc" />
      </Glyph>
    ),
  },
  {
    label: "Degenerate nodes",
    icon: (
      <Glyph box={[442, 114, 54, 54]}>
        <path d="M450 132L466 122V134Z" fill="#f00000" stroke="#f00000" strokeWidth="4" />
        <path
          d="M444 118L450 124M450 118L444 124M478 132L486 140M486 132L478 140M458 152L466 160M466 152L458 160"
          stroke="#c8b400"
          strokeWidth="3"
        />
        <path d="M472 158L490 146V160Z" fill={BLUE} />
      </Glyph>
    ),
  },
  {
    label: "Rotate copy",
    icon: (
      <Glyph box={[530, 116, 45, 51]}>
        <path d="M548 122L560 156H534Z" stroke="#fff" strokeWidth="3.5" />
        <path d="M558 132L573 160H545Z" stroke="#f00000" strokeWidth="4" />
      </Glyph>
    ),
  },
  {
    label: "Stamp",
    icon: (
      <Glyph box={[610, 114, 54, 54]}>
        <path
          d="M626 120H648V134H626ZM632 134V142H642V134M622 142H652L660 154H614ZM614 154H660V162H614Z"
          stroke="#fff"
          strokeWidth="3.5"
        />
      </Glyph>
    ),
  },
  {
    label: "Edit reference",
    icon: (
      <Glyph box={[690, 112, 60, 57]}>
        <path d="M698 120H742V162H698Z" stroke="#ccc" strokeWidth="3.5" />
        <path d="M698 138H720V160" stroke={BLUE} strokeWidth="3" />
        <path d="M698 162L744 118" stroke="#e00000" strokeWidth="4" />
        <Dots at={[[692, 115], [738, 115], [738, 157]]} size={10} fill="#ccc" />
        <Dots at={[[692, 134], [716, 134], [692, 157]]} size={10} fill={BLUE} />
      </Glyph>
    ),
  },
  {
    label: "Reference point",
    icon: (
      <Glyph box={[774, 112, 60, 57]}>
        <path d="M783 120H825V162H783Z" stroke="#eee" strokeWidth="3.5" />
        <Dots at={[[778, 115], [820, 115], [778, 157], [820, 157]]} size={11} fill={BLUE} />
        <path
          d="M804 122L811 130H797ZM804 160L811 152H797ZM786 141L794 134V148ZM822 141L814 134V148Z"
          fill="#f00000"
          stroke="#f00000"
          strokeWidth="3"
        />
        <path d="M799 136H810V146H799Z" fill="#ffee00" />
      </Glyph>
    ),
  },
  {
    label: "Add node",
    icon: (
      <Glyph box={[858, 112, 60, 57]}>
        <path d="M868 136H894V160H868ZM880 144Q882 122 908 120" stroke="#999" strokeWidth="3.5" />
        <Dots at={[[863, 130], [890, 130], [863, 155], [890, 155], [904, 116]]} size={10} fill="#999" />
      </Glyph>
    ),
  },
  {
    label: "Remove node",
    icon: (
      <Glyph box={[942, 112, 60, 57]}>
        <path d="M952 136H978V160H952ZM962 152L994 120M966 134L996 128" stroke="#999" strokeWidth="3.5" />
        <Dots at={[[947, 130], [974, 136], [947, 155], [974, 155], [988, 116]]} size={10} fill="#999" />
      </Glyph>
    ),
  },
  {
    label: "Move to front",
    icon: (
      <Glyph box={[1028, 112, 60, 57]}>
        <path d="M1040 119H1064L1054 133H1032Z" stroke="#fff" strokeWidth="3.5" />
        <path d="M1062 124Q1076 126 1074 138M1068 134L1074 140L1080 134" stroke="#f00000" strokeWidth="5" />
        <path d="M1056 146H1074V162H1056Z" stroke="#fff" strokeWidth="3.5" />
        <path d="M1066 154H1084" stroke={BLUE} strokeWidth="3" />
      </Glyph>
    ),
  },
  {
    label: "Move to back",
    icon: (
      <Glyph box={[1110, 112, 60, 57]}>
        <path d="M1138 119H1163L1152 133H1130Z" stroke="#fff" strokeWidth="3.5" />
        <path d="M1160 128Q1160 148 1140 146M1146 138L1138 146L1146 152" stroke="#f00000" strokeWidth="5" />
        <path d="M1114 144H1132V161H1114Z" stroke="#fff" strokeWidth="3.5" />
        <path d="M1122 153H1140" stroke={BLUE} strokeWidth="3" />
      </Glyph>
    ),
  },
  {
    label: "Lock position",
    icon: (
      <Glyph box={[1194, 112, 60, 57]}>
        <path d="M1204 140H1228V160H1204ZM1198 150H1204M1228 150H1240M1216 124V140" stroke="#999" strokeWidth="3.5" />
        <Dots at={[[1198, 145], [1211, 120], [1211, 145]]} size={10} fill="#999" />
        <path d="M1234 130H1250V144H1234ZM1238 130V120H1246V130" fill="#999" stroke="#999" strokeWidth="2.5" />
      </Glyph>
    ),
  },
  {
    label: "Change face",
    icon: (
      <Glyph box={[1278, 112, 60, 57]}>
        <path d="M1288 142V160H1328V124" stroke="#eee" strokeWidth="3.5" />
        <path d="M1288 142L1328 122" stroke="#f00000" strokeWidth="5" />
        <Dots at={[[1282, 137], [1322, 118], [1282, 155], [1322, 155]]} size={11} fill={BLUE} />
      </Glyph>
    ),
  },
  {
    label: "Clear frame",
    icon: (
      <Glyph box={[1362, 112, 60, 57]}>
        <path d="M1372 122H1412V160H1372Z" stroke="#ccc" strokeWidth="3.5" />
        <path d="M1380 130H1404V152H1380Z" stroke={BLUE} strokeWidth="3.5" />
        <path d="M1374 158L1410 120" stroke="#e00000" strokeWidth="4" />
        <Dots at={[[1366, 116], [1408, 116], [1366, 156], [1408, 156]]} size={10} fill="#ccc" />
        <Dots at={[[1376, 127], [1398, 127], [1376, 147], [1398, 147]]} size={8} fill={BLUE} />
      </Glyph>
    ),
  },
];

function InspectorBar() {
  return (
    <div className="flex h-[42px] shrink-0 items-center border-t border-b border-t-[#8a8a8a] border-b-[#3a3a3a] bg-[#4a4a4a] pl-1.5">
      <Grip />
      <div className="flex pr-[3px] pl-px">
        <ToolButton label="Edit path">
          <Glyph box={[40, 108, 66, 66]}>
            <path d="M46 142Q46 164 66 162H88" stroke="#f03010" strokeWidth="5" />
            <Dots at={[[41, 137], [52, 156], [78, 158]]} size={11} fill="#f03010" />
            <path d="M64 128L80 140" stroke="#f5e000" strokeWidth="5" />
            <path d="M80 140L98 160" stroke="#999" strokeWidth="5" />
            <Dots at={[[72, 117], [88, 112], [84, 126], [96, 122]]} size={8} fill="#eeeecc" />
          </Glyph>
        </ToolButton>
        <ToolButton label="Cancel">
          <Glyph box={[128, 110, 57, 60]}>
            <path d="M132 115L180 164M180 114Q150 134 134 166" stroke="#e01010" strokeWidth="7" />
          </Glyph>
        </ToolButton>
        <ToolButton label="Properties">
          <TableIcon />
        </ToolButton>
      </div>
      <Separator />
      <div className="flex px-0.5 pb-[3px]">
        {FIELDS.map((field) => (
          <InspectorField key={field.label} {...field} />
        ))}
      </div>
      <Separator />
      <div className="flex pr-[3px] pl-px">
        <ToolButton label="Snap to face">
          <Glyph box={[1018, 112, 63, 57]}>
            <path
              d="M1024 144L1032 136H1054V156L1046 164H1024ZM1024 144H1046V164M1046 144L1054 136M1032 136V156L1024 164M1032 156H1054"
              stroke="#fff"
              strokeWidth="3"
            />
            <path d="M1038 132L1050 120H1076V132L1058 136Z" fill="#666" stroke="#fff" strokeWidth="3" />
          </Glyph>
        </ToolButton>
        <ToolButton label="Switch 2D and 3D">
          <Glyph box={[1104, 112, 63, 57]}>
            <path d="M1109 118H1125V134H1109Z" stroke="#fff" strokeWidth="3.5" />
            <path d="M1118 162L1146 120" stroke="#ccc" strokeWidth="4" />
            <path
              d="M1132 144L1140 134H1160V154L1152 163H1132ZM1132 144H1152V163M1152 144L1160 134M1140 134V154L1132 163M1140 154H1160"
              stroke="#fff"
              strokeWidth="3"
            />
          </Glyph>
        </ToolButton>
        <ToolButton label="Pick node">
          <Glyph box={[1190, 112, 57, 57]}>
            <path d="M1198 156Q1202 136 1220 136L1232 120" stroke="#888" strokeWidth="4" />
            <path d="M1213 130H1225V142H1213ZM1218 140V158L1224 153L1230 163L1237 158L1230 150H1238Z" fill="#999" />
          </Glyph>
        </ToolButton>
      </div>
      <Separator />
      <div className="flex pr-[3px] pl-px">
        <ToolButton label="Rectangle" active>
          <Glyph box={[0, 112, 60, 57]}>
            <path d="M7 120H53V161H7Z" fill="#007c7c" stroke="#fff" strokeWidth="3.5" />
            <path d="M9 122H51V159Z" fill="#00ff00" />
          </Glyph>
        </ToolButton>
        <ToolButton label="Window polygon">
          <Glyph box={[84, 112, 60, 57]}>
            <path d="M92 122V163H136Z" fill="#007c7c" stroke="#fff" strokeWidth="3.5" />
            <path d="M104 120H134L126 134H116ZM114 120V130M124 120V130" stroke="#ddd" strokeWidth="3" />
          </Glyph>
        </ToolButton>
        <ToolButton label="Crossing polygon">
          <Glyph box={[168, 112, 60, 57]}>
            <path d="M180 122V163H220Z" fill="#00ff00" stroke="#fff" strokeWidth="3.5" strokeDasharray="4 2" />
            <path d="M192 120H216L208 136H200ZM204 120V130" stroke="#ddd" strokeWidth="3" />
          </Glyph>
        </ToolButton>
        <ToolButton label="Fence">
          <Glyph box={[252, 112, 60, 57]}>
            <path d="M286 126H266V146H286V158H298" stroke="#00e000" strokeWidth="7" />
            <path d="M292 142V122H302V132H294" stroke="#ddd" strokeWidth="4" />
          </Glyph>
        </ToolButton>
      </div>
      <Separator />
      <div className="flex pl-px">
        {EDIT_TOOLS.map(({ label, icon }) => (
          <ToolButton key={label} label={label}>
            {icon}
          </ToolButton>
        ))}
      </div>
    </div>
  );
}

/* ---------- Status bar ---------- */

function Coordinate({ axis, value }: { axis: string; value: string }) {
  const id = `coord-${axis.toLowerCase()}`;
  return (
    <div className="flex items-center gap-0.5">
      <label htmlFor={id} className="flex w-2 flex-col items-center text-[8px] leading-[9px] text-[#ccc]">
        <span className="size-2 border-2 border-white bg-[#333]" />
        {axis}
      </label>
      <input id={id} defaultValue={value} className="h-5 w-[74px] border border-[#9a9a9a] bg-[#2a2a2a] pl-1" />
    </div>
  );
}

function StatusBar() {
  return (
    <footer className="flex h-[25px] shrink-0 items-center bg-[#555] pr-4 pl-2">
      <p className="pb-1.5">Edit the selected object(s)</p>
      <div className="ml-auto flex items-center">
        <button className="w-[38px] text-left">SNAP</button>
        <button className="w-[38px] text-left">GEO</button>
        <div className="flex gap-2">
          <Coordinate axis="X" value="-22.190713 in" />
          <Coordinate axis="Y" value="2.109948 in" />
          <Coordinate axis="Z" value="0 in" />
        </div>
        <span className="w-[63px] pb-1.5 pl-2">16%</span>
        <time className="w-[43px] pb-1.5 text-right whitespace-nowrap">4:46 PM</time>
      </div>
    </footer>
  );
}

export default function App() {
  return (
    <div className="relative flex h-screen flex-col overflow-hidden bg-[#3a3a3a] font-['Open_Sans','Noto_Sans',sans-serif] text-[11px] leading-4 text-white">
      <TitleBar />
      <MenuBar />
      <Ribbon />
      <PenToolbar />
      <div className="flex min-h-0 flex-1">
        <Workspace />
        <SelectionPanel />
      </div>
      <InspectorBar />
      <StatusBar />

      {/* Mouse pointer */}
      <svg viewBox="0 0 12 19" width="12" height="19" className="absolute top-0 left-[379px]" aria-hidden="true">
        <path d="M.5 .5V15.5L4 12.5L7 18.5L9.5 17.5L6.8 11.5H11.5Z" fill="#fff" stroke="#222" />
      </svg>
    </div>
  );
}
